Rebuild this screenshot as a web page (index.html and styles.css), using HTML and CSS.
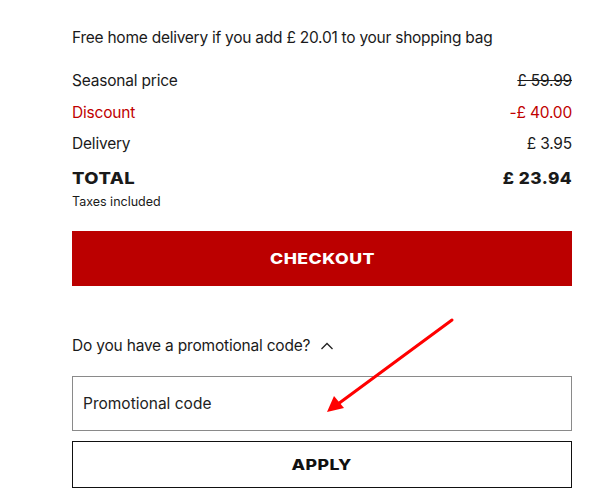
FILE: index.html
```html
<!DOCTYPE html>
<html lang="en">
<head>
    <meta charset="UTF-8">
    <meta name="viewport" content="width=device-width, initial-scale=1.0">
    <title>Shopping bag</title>
    <link rel="stylesheet" href="styles.css">
</head>
<body>
    <div id="summary">
        <p class="free-note">Free home delivery if you add £ 20.01 to your shopping bag</p>
        <div class="rows">
            <div class="row"><span>Seasonal price</span><span class="old">£ 59.99</span></div>
            <div class="row discount"><span>Discount</span><span>-£ 40.00</span></div>
            <div class="row"><span>Delivery</span><span>£ 3.95</span></div>
            <div class="row total"><span class="wide">TOTAL</span><span class="wide right">£ 23.94</span></div>
        </div>
        <p class="taxes">Taxes included</p>
        <button class="checkout"><span class="wide">CHECKOUT</span></button>
        <div class="promo-toggle">
            Do you have a promotional code?
            <svg class="chevron" width="14" height="14" viewBox="0 0 14 14"><path d="M1.5 10 L7 4.5 L12.5 10" fill="none" stroke="#222" stroke-width="1.3"/></svg>
        </div>
        <div class="promo-input">Promotional code</div>
        <button class="apply"><span class="wide">APPLY</span></button>
    </div>
    <!-- pointer arrow -->
    <svg class="arrow" width="597" height="501" viewBox="0 0 597 501">
        <line x1="452" y1="320" x2="338" y2="404" stroke="#f00" stroke-width="3" stroke-linecap="round"/>
        <polygon points="327,412 334,396 344,408" fill="#f00"/>
    </svg>
</body>
</html>
```

FILE: styles.css
```css
body {
    margin: 0;
    background: #fff;
    color: #1a1a1a;
    font-family: Inter, "Liberation Sans", Arial, sans-serif;
    font-size: 15.5px;
    position: relative;
}
#summary {
    width: 500px;
    margin-left: 72px;
    padding-top: 27px;
}
.free-note {
    margin: 0 0 21px;
    line-height: 22px;
    letter-spacing: -0.25px;
}
.rows {
    display: flex;
    flex-direction: column;
    gap: 9.5px;
}
.row {
    display: flex;
    justify-content: space-between;
    line-height: 22px;
    letter-spacing: -0.2px;
}
.row .old {
    text-decoration: line-through;
}
.discount {
    color: #c00000;
}
.total {
    margin-top: 2px;
    font-weight: 800;
    font-size: 16px;
    letter-spacing: 0.4px;
}
/* stretched caps for the bold labels */
.wide {
    display: inline-block;
    transform: scaleX(1.15);
    transform-origin: left center;
}
.wide.right {
    transform: scaleX(1.08);
    transform-origin: right center;
}
.taxes {
    margin: 4.5px 0 0;
    font-size: 12.5px;
    line-height: 18px;
}
button {
    display: block;
    width: 500px;
    font-family: Inter, "Liberation Sans", Arial, sans-serif;
    font-weight: 800;
    font-size: 15px;
    letter-spacing: 0.4px;
    cursor: pointer;
}
button .wide {
    transform: scaleX(1.18);
    transform-origin: center;
}
.checkout {
    margin-top: 20px;
    height: 55px;
    background: #bb0000;
    color: #fff;
    border: none;
}
.promo-toggle {
    display: flex;
    align-items: center;
    gap: 10px;
    margin-top: 49px;
    line-height: 22px;
    letter-spacing: -0.2px;
}
.promo-input {
    margin-top: 19px;
    height: 53px;
    border: 1px solid #8a8a8a;
    box-sizing: content-box;
    width: 488px;
    padding-left: 10px;
    display: flex;
    align-items: center;
    color: #222;
}
.apply {
    margin-top: 10px;
    height: 47px;
    background: #fff;
    color: #111;
    border: 1px solid #111;
}
.arrow {
    position: absolute;
    top: 0;
    left: 0;
    pointer-events: none;
}
```
